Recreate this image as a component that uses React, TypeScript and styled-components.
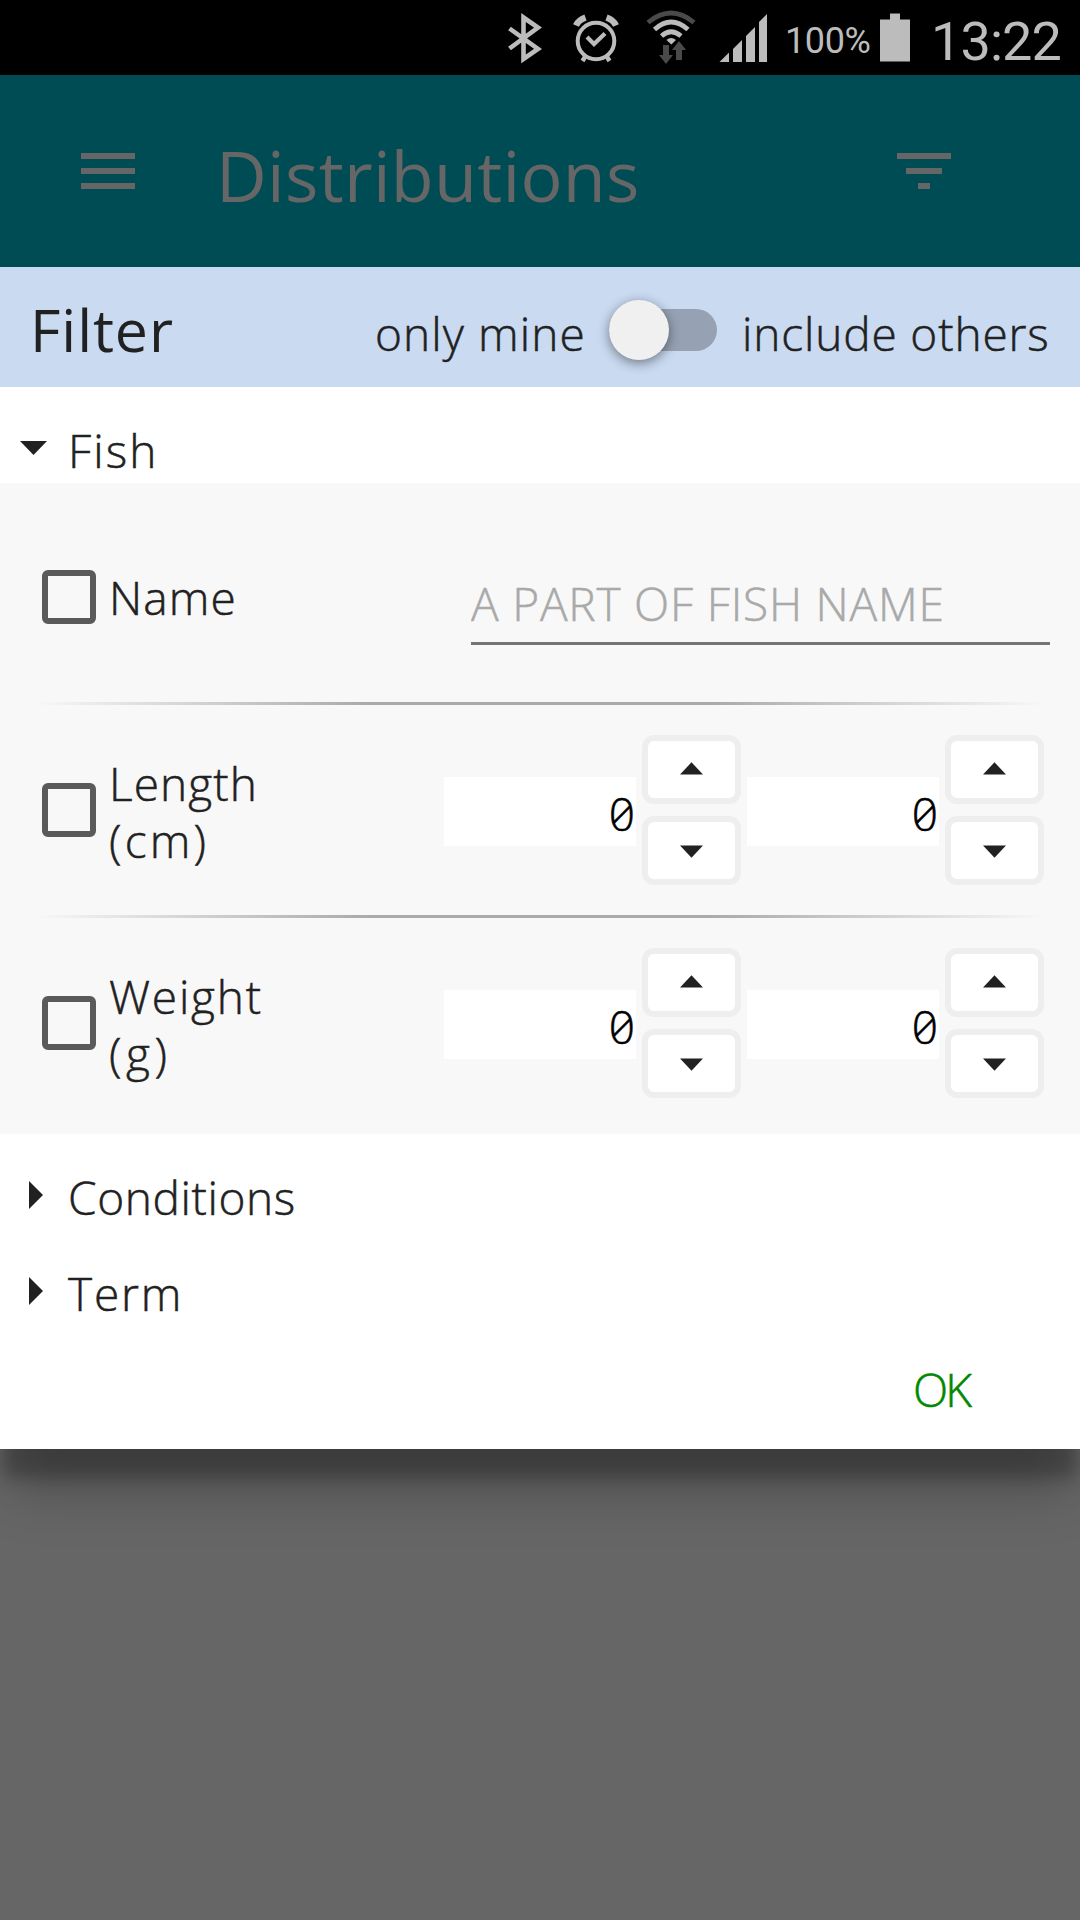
import React from "react";
import styled, { createGlobalStyle } from "styled-components";

const GlobalStyle = createGlobalStyle`
  *, *::before, *::after { box-sizing: border-box; }
  body {
    margin: 0;
    background: #666666;
    font-family: "Open Sans", "Noto Sans", sans-serif;
    font-size: 46px;
    font-weight: 300;
    color: #212121;
  }
  button, input { font: inherit; }
`;

const Screen = styled.div`
  display: flex;
  flex-direction: column;
  width: 1080px;
  height: 1920px;
  overflow: hidden;
  background: #666666;
`;

const StatusBar = styled.header`
  display: flex;
  align-items: center;
  height: 75px;
  flex: none;
  padding-left: 508px;
  background: #000000;
  color: #bcbcbc;
  font-family: Roboto, sans-serif;
  font-weight: 400;
  white-space: nowrap;
`;

const StatusIcon = styled.svg<{ $gap: number }>`
  flex: none;
  display: block;
  margin-right: ${(p) => p.$gap}px;
`;

const BatteryLevel = styled.span`
  width: 95px;
  font-size: 36px;
  line-height: 44px;
  letter-spacing: -0.4px;
  padding-top: 7px;
`;

const Clock = styled.span`
  font-size: 54px;
  line-height: 64px;
  letter-spacing: -0.9px;
  padding-top: 9px;
`;

const AppBar = styled.div`
  display: flex;
  align-items: center;
  flex: none;
  height: 192px;
  padding: 0 129px 0 81px;
  background: #004c55;
  color: #666666;
`;

const BarIcon = styled.svg`
  flex: none;
  display: block;
  width: 54px;
  height: 36px;
`;

const PageTitle = styled.h1`
  margin: 0 auto 0 81px;
  padding-top: 7px;
  font-size: 70px;
  font-weight: 400;
  line-height: 96px;
  letter-spacing: 0.3px;
`;

const Dialog = styled.section`
  position: relative;
  flex: none;
  display: flex;
  flex-direction: column;
  height: 1182px;
  background: #ffffff;
  -webkit-text-stroke: 0.5px currentColor;
  box-shadow:
    0 32px 16px -3px rgba(0, 0, 0, 0.25),
    0 52px 50px -9px rgba(0, 0, 0, 0.22);
`;

const DialogHeader = styled.div`
  display: flex;
  align-items: center;
  flex: none;
  height: 120px;
  padding: 6px 0 0 30px;
  background: #c9daf1;
`;

const DialogTitle = styled.h2`
  margin: 0;
  width: 345px;
  font-size: 59px;
  font-weight: 400;
  line-height: 80px;
  letter-spacing: 0.9px;
  padding-bottom: 2px;
  -webkit-text-stroke: 0;
`;

const Label = styled.span<{ $spacing: number }>`
  line-height: 57px;
  letter-spacing: ${(p) => p.$spacing}px;
  padding-top: 5px;
  white-space: nowrap;
`;

const SwitchLabel = styled(Label)`
  padding-top: 7px;
`;

const OwnLabel = styled(SwitchLabel)`
  width: 210px;
`;

const Switch = styled.span`
  display: flex;
  align-items: center;
  flex: none;
  width: 108px;
  height: 42px;
  margin: 0 25px 0 24px;
  border-radius: 21px;
  background: #96a2b3;
`;

const Knob = styled.span`
  flex: none;
  width: 60px;
  height: 60px;
  border-radius: 50%;
  background: #f0f0f0;
  box-shadow: 0 3px 12px rgba(0, 0, 0, 0.45);
`;

const AccordionHeader = styled.div`
  display: flex;
  align-items: center;
  flex: none;
  height: 96px;
  padding: 26px 0 0 19px;
`;

const Arrow = styled.svg`
  flex: none;
  display: block;
  width: 30px;
  height: 30px;
  margin-right: 19px;
`;

const Panel = styled.div`
  display: flex;
  flex-direction: column;
  flex: none;
  height: 651px;
  padding-top: 9px;
  background: #f8f8f8;
`;

const FilterRow = styled.div<{ $right: number }>`
  display: flex;
  align-items: center;
  height: 210px;
  padding: 0 ${(p) => p.$right}px 0 42px;
`;

const Divider = styled.hr`
  flex: none;
  height: 3px;
  width: 1010px;
  margin: 0 auto;
  border: 0;
  background: linear-gradient(
    to right,
    rgba(170, 170, 170, 0),
    #aaaaaa 33%,
    #aaaaaa 67%,
    rgba(170, 170, 170, 0)
  );
`;

const CheckBox = styled.span`
  flex: none;
  width: 54px;
  height: 54px;
  margin-right: 13px;
  border: 6px solid #5a5a5a;
  border-radius: 6px;
`;

const RowLabel = styled.span<{ $drop?: number }>`
  display: flex;
  flex-direction: column;
  margin-right: auto;
  padding-top: ${(p) => p.$drop ?? 0}px;
`;

const LabelLine = styled.span<{ $spacing: number }>`
  line-height: 57px;
  letter-spacing: ${(p) => p.$spacing}px;
`;

const NameInput = styled.input`
  width: 579px;
  height: 81px;
  margin-top: 15px;
  padding: 0;
  border: 0;
  border-bottom: 3px solid #757575;
  border-radius: 0;
  outline: none;
  background: transparent;
  letter-spacing: 0.8px;

  &::placeholder {
    color: #a9a9a9;
    opacity: 1;
  }
`;

const Spinner = styled.div`
  display: flex;
  align-items: center;
  gap: 6px;
  margin-left: 6px;
`;

const NumberInput = styled.input`
  width: 192px;
  height: 69px;
  margin-top: 3px;
  padding: 2px 1px 0 0;
  border: 0;
  border-radius: 0;
  outline: none;
  background: #ffffff;
  color: #000000;
  text-align: right;
  font-feature-settings: "zero";
`;

const StepButtons = styled.div`
  display: flex;
  flex-direction: column;
  gap: 12px;
`;

const StepButton = styled.button`
  display: flex;
  align-items: center;
  justify-content: center;
  width: 99px;
  height: 69px;
  padding: 0;
  border: 6px solid #eeeeee;
  border-radius: 12px;
  background: #ffffff;
`;

const StepArrow = styled.svg`
  display: block;
  width: 23px;
  height: 15px;
`;

const DialogActions = styled.div`
  display: flex;
  justify-content: flex-end;
  padding: 32px 111px 0 0;
`;

const OkButton = styled.button`
  padding: 0;
  border: 0;
  background: transparent;
  color: #008800;
  line-height: 63px;
  letter-spacing: -3px;
`;

function BluetoothIcon() {
  return (
    <StatusIcon $gap={31} width="34" height="50" viewBox="508 13 34 50" fill="none" stroke="#bcbcbc" strokeWidth="4.6">
      <path d="M509.500 28.500 L538 49 L523.500 59 V17.500 L538 27.500 L509.500 48.500" strokeMiterlimit="8" />
    </StatusIcon>
  );
}

function AlarmIcon() {
  return (
    <StatusIcon $gap={27} width="46" height="50" viewBox="573 13 46 50" fill="none" stroke="#bcbcbc">
      <circle cx="596" cy="41" r="18.300" strokeWidth="4" />
      <path d="M587 37 L594 44 L605 33.500" strokeWidth="4.200" />
      <path d="M576 25.500 Q578.500 20 585.500 17.500" strokeWidth="6.500" />
      <path d="M616 25.500 Q613.500 20 606.500 17.500" strokeWidth="6.500" />
      <path d="M585.500 56 L582.500 61 M606.500 56 L609.500 61" strokeWidth="4.400" />
    </StatusIcon>
  );
}

function WifiIcon() {
  return (
    <StatusIcon $gap={22} width="50" height="56" viewBox="646 10 50 56" fill="none">
      <path d="M648 22.500 Q671 3.500 694 22.500" stroke="#4a4a4a" strokeWidth="4.800" />
      <path d="M654.500 29.500 Q671 14.500 688 29.500" stroke="#bcbcbc" strokeWidth="4.800" />
      <path d="M661.500 36 Q671 27.500 681 36" stroke="#bcbcbc" strokeWidth="4.800" />
      <path d="M666.500 40 Q671 36 676 40 L671.300 44.500 Z" fill="#bcbcbc" />
      <path d="M663 45 H669 V55 H673 L666 64 L659 55 H663 Z" fill="#4a4a4a" />
      <path d="M676 60 V50 H672 L679 41 L686 50 H682 V60 Z" fill="#4a4a4a" />
    </StatusIcon>
  );
}

function SignalIcon() {
  return (
    <StatusIcon $gap={17} width="50" height="50" viewBox="718 13 50 50" fill="#bcbcbc">
      <path d="M719.500 62 L729 52.500 V62 Z" />
      <path d="M733 62 V49 L742 40 V62 Z" />
      <path d="M746 62 V36 L755 27 V62 Z" />
      <path d="M759 62 V22 L767 14 V62 Z" />
    </StatusIcon>
  );
}

function BatteryIcon() {
  return (
    <StatusIcon $gap={21} width="30" height="50" viewBox="0 0 30 50" fill="#bcbcbc">
      <path d="M10 0.500 H20 V6.500 H30 V48.500 H0 V6.500 H10 Z" />
    </StatusIcon>
  );
}

function SectionHeader({ title, spacing, open = false }: { title: string; spacing: number; open?: boolean }) {
  return (
    <AccordionHeader>
      <Arrow viewBox="0 0 30 30" fill="#212121">
        <path d={open ? "M1 8 H28 L14.500 22 Z" : "M10 1 L24 15 L10 29 Z"} />
      </Arrow>
      <Label $spacing={spacing}>{title}</Label>
    </AccordionHeader>
  );
}

function NumberSpinner() {
  return (
    <Spinner>
      <NumberInput defaultValue="0" />
      <StepButtons>
        <StepButton aria-label="Increase">
          <StepArrow viewBox="0 0 23 15" fill="#212121">
            <path d="M0 12.500 H23 L11.500 0.200 Z" />
          </StepArrow>
        </StepButton>
        <StepButton aria-label="Decrease">
          <StepArrow viewBox="0 0 23 15" fill="#212121">
            <path d="M0 2.500 H23 L11.500 14.800 Z" />
          </StepArrow>
        </StepButton>
      </StepButtons>
    </Spinner>
  );
}

type RangeProps = { name: string; nameSpacing: number; unit: string; unitSpacing: number };

function RangeFilter({ name, nameSpacing, unit, unitSpacing }: RangeProps) {
  return (
    <FilterRow $right={36}>
      <CheckBox />
      <RowLabel $drop={4}>
        <LabelLine $spacing={nameSpacing}>{name}</LabelLine>
        <LabelLine $spacing={unitSpacing}>{unit}</LabelLine>
      </RowLabel>
      <NumberSpinner />
      <NumberSpinner />
    </FilterRow>
  );
}

export default function App() {
  return (
    <>
      <GlobalStyle />
      <Screen>
        <StatusBar>
          <BluetoothIcon />
          <AlarmIcon />
          <WifiIcon />
          <SignalIcon />
          <BatteryLevel>100%</BatteryLevel>
          <BatteryIcon />
          <Clock>13:22</Clock>
        </StatusBar>
        <AppBar>
          <BarIcon viewBox="0 0 54 36" fill="#666666">
            <path d="M0 0 H54 V6 H0 Z M0 15 H54 V21 H0 Z M0 30 H54 V36 H0 Z" />
          </BarIcon>
          <PageTitle>Distributions</PageTitle>
          <BarIcon viewBox="0 0 54 36" fill="#666666">
            <path d="M0 0 H54 V6 H0 Z M9 15 H45 V21 H9 Z M21 30 H33 V36 H21 Z" />
          </BarIcon>
        </AppBar>
        <Dialog>
          <DialogHeader>
            <DialogTitle>Filter</DialogTitle>
            <OwnLabel $spacing={1.1}>only mine</OwnLabel>
            <Switch>
              <Knob />
            </Switch>
            <SwitchLabel $spacing={0.85}>include others</SwitchLabel>
          </DialogHeader>
          <SectionHeader title="Fish" spacing={2.1} open />
          <Panel>
            <FilterRow $right={30}>
              <CheckBox />
              <RowLabel $drop={1}>
                <LabelLine $spacing={1.1}>Name</LabelLine>
              </RowLabel>
              <NameInput placeholder="A PART OF FISH NAME" />
            </FilterRow>
            <Divider />
            <RangeFilter name="Length" nameSpacing={1.1} unit="(cm)" unitSpacing={3.2} />
            <Divider />
            <RangeFilter name="Weight" nameSpacing={1.8} unit="(g)" unitSpacing={4.6} />
          </Panel>
          <SectionHeader title="Conditions" spacing={0.6} />
          <SectionHeader title="Term" spacing={1.8} />
          <DialogActions>
            <OkButton>OK</OkButton>
          </DialogActions>
        </Dialog>
      </Screen>
    </>
  );
}
